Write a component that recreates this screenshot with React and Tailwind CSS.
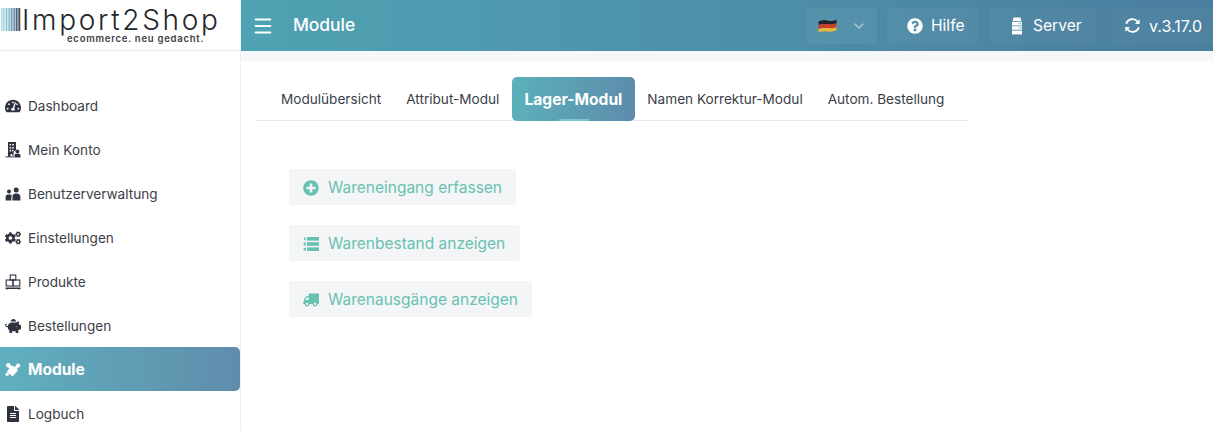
import { FaTachometerAlt, FaCogs, FaPiggyBank, FaFileAlt, FaPlusCircle, FaTruck, FaQuestionCircle } from 'react-icons/fa'
import { Menu, ChevronDown } from 'lucide-react'

// ─── Inline drawings ───────────────────────────────────────────────────────
function Barcode() {
  const cols = ['#a9d8de', '#93ccd5', '#a5d5dc', '#84c0cf', '#8cc0d0', '#6ea9c0', '#6f9fb8', '#5d8aa8', '#4f7a98', '#3d5f7a', '#2f3f52', '#2c2f38']
  return (
    <svg width="20" height="23" viewBox="0 0 20 23" className="shrink-0 mt-[1px]">
      {cols.map((c, i) => (
        <rect key={i} x={i * 1.65} y="0" width="1.1" height="23" fill={c} />
      ))}
    </svg>
  )
}

function BoxesIcon({ className }) {
  return (
    <svg viewBox="0 0 16 16" className={className} fill="none" stroke="currentColor" strokeWidth="1.1">
      <rect x="5.2" y="1" width="5.6" height="5" />
      <rect x="1.2" y="6" width="6.8" height="6" />
      <rect x="8" y="6" width="6.8" height="6" />
      <path d="M0.5 14.2h15M2 14.2v1.3M14 14.2v1.3" strokeWidth="1.4" />
    </svg>
  )
}

function BuildingUserIcon({ className }) {
  return (
    <svg viewBox="0 0 16 16" className={className} fill="currentColor">
      <path fillRule="evenodd" d="M3 0h8v8.2a3 3 0 0 0-2.4 3.2v2.1H7.2V12H5.6v2.6H3ZM4.6 2v1.6h1.5V2Zm2.6 0v1.6h1.6V2ZM4.6 4.9v1.6h1.5V4.9Zm2.6 0v1.6h1.6V4.9ZM4.6 7.8v1.6h1.5V7.8Zm2.6 0v1.6h1.2V7.8Z" />
      <rect x="0.5" y="14.4" width="8.5" height="1" />
      <circle cx="12.4" cy="9.4" r="1.9" />
      <path d="M9.4 15.6v-2.2c0-1 .9-1.7 1.8-1.7h2.4c1 0 1.9.7 1.9 1.7v2.2Z" />
    </svg>
  )
}

function UsersIcon({ className }) {
  return (
    <svg viewBox="0 0 16 16" className={className} fill="currentColor">
      <circle cx="4" cy="5.6" r="2" />
      <path d="M0.6 14.6v-3.4c0-1.5 1-2.6 2.4-2.6h2c.8 0 1.4.3 1.9.8-.4.6-.6 1.2-.6 1.9v3.3Z" />
      <circle cx="11.2" cy="4" r="2.5" />
      <path d="M7.4 14.6v-3.6c0-2 1.4-3.5 3-3.5h1.6c1.7 0 3.4 1.5 3.4 3.5v3.6Z" />
    </svg>
  )
}

function PuzzleIcon({ className }) {
  return (
    <svg viewBox="0 0 16 16" className={className} fill="currentColor">
      <path d="M7.2 3.4 13 8.2 7.6 14.6 1.8 9.4Z" />
      <circle cx="3.2" cy="3.2" r="2.2" />
      <path d="M3 3.4 6 2.8 7.2 6 4 7Z" />
      <circle cx="13.2" cy="3.4" r="2" />
      <path d="M9 5 12.4 3 13.6 5 11 8Z" />
      <circle cx="2.2" cy="12.2" r="1.7" />
    </svg>
  )
}

function ServerIcon({ className }) {
  return (
    <svg viewBox="0 0 12 18" className={className} fill="currentColor">
      <path d="M2.6 0.6h6.8l1.1 3.6h-9z" />
      <path fillRule="evenodd" d="M1 5h10v3.5H1Zm6.5 1.2v1h1v-1Zm1.8 0v1h1v-1Z" />
      <path fillRule="evenodd" d="M1 9.3h10v3.5H1Zm6.5 1.2v1h1v-1Zm1.8 0v1h1v-1Z" />
      <path d="M1 13.6h10v3.8H1z" />
    </svg>
  )
}

function ListIcon({ className }) {
  return (
    <svg viewBox="0 0 16 16" className={className} fill="currentColor">
      <rect x="4" y="1" width="12" height="3.6" />
      <rect x="4" y="6.2" width="12" height="3.6" />
      <rect x="4" y="11.4" width="12" height="3.6" />
      <rect x="1" y="1.4" width="1.6" height="2.8" />
      <rect x="0.6" y="6.6" width="2.2" height="2.8" />
      <rect x="0.6" y="11.8" width="2.2" height="2.8" />
    </svg>
  )
}

function SyncIcon({ className }) {
  return (
    <svg viewBox="0 0 18 18" className={className} fill="none" stroke="currentColor" strokeWidth="2">
      <path d="M2.4 7.2A6.8 6.8 0 0 1 14.4 5" />
      <path d="M15.6 10.8A6.8 6.8 0 0 1 3.6 13" />
      <path d="M16.6 2.4v5h-5z" fill="currentColor" stroke="none" />
      <path d="M1.4 15.6v-5h5z" fill="currentColor" stroke="none" />
    </svg>
  )
}

function FlagIcon() {
  return (
    <svg width="19" height="13" viewBox="0 0 18 13">
      <path d="M0 2.5Q4.5 0 9 1.5T18 0.5V4.5Q13.5 5.5 9 5T0 6Z" fill="#23232b" />
      <path d="M0 6Q4.5 4.5 9 5T18 4.5V8.5Q13.5 9.5 9 9T0 10Z" fill="#c9402f" />
      <path d="M0 10Q4.5 8.5 9 9T18 8.5V11.5Q13.5 13 9 12.5T0 13Z" fill="#e9b93f" />
    </svg>
  )
}

// ─── Data ──────────────────────────────────────────────────────────────────
const NAV = [
  { label: 'Dashboard', Icon: FaTachometerAlt },
  { label: 'Mein Konto', Icon: BuildingUserIcon },
  { label: 'Benutzerverwaltung', Icon: UsersIcon },
  { label: 'Einstellungen', Icon: FaCogs },
  { label: 'Produkte', Icon: BoxesIcon },
  { label: 'Bestellungen', Icon: FaPiggyBank },
  { label: 'Module', Icon: PuzzleIcon, active: true },
  { label: 'Logbuch', Icon: FaFileAlt },
]

const TABS = ['Modulübersicht', 'Attribut-Modul', 'Lager-Modul', 'Namen Korrektur-Modul', 'Autom. Bestellung']

const ACTIONS = [
  { label: 'Wareneingang erfassen', Icon: FaPlusCircle, w: 'w-[227px]' },
  { label: 'Warenbestand anzeigen', Icon: ListIcon, w: 'w-[231px]' },
  { label: 'Warenausgänge anzeigen', Icon: FaTruck, w: 'w-[243px]', flip: true },
]

// ─── Sidebar ───────────────────────────────────────────────────────────────
function Sidebar() {
  return (
    <aside className="w-[241px] shrink-0 border-r border-[#eef0f3] bg-white h-[431px] overflow-hidden">
      <div className="h-[51px] border-b border-[#e9ebee] flex items-start pl-[1px] pt-[7px]">
        <Barcode />
        <div className="ml-[1px]">
          <div className="h-[27px] text-[28px] leading-[26px] font-light text-[#23262d] tracking-[2.7px] font-['Inter',sans-serif]">Import2Shop</div>
          <div className="ml-[45px] text-[9.5px] leading-[10px] font-semibold tracking-[0.75px] text-[#3a3d44] whitespace-nowrap">ecommerce. neu gedacht.</div>
        </div>
      </div>
      <nav className="pt-[32px]">
        {NAV.map(({ label, Icon, active }) => (
          <div
            key={label}
            className={`h-[44px] pt-[2px] flex items-center pl-[5px] gap-[7px] ${active ? 'rounded-r-[5px] bg-gradient-to-r from-[#5fb0bf] to-[#5f8dab] text-white font-bold text-[15.5px]' : 'text-[#3c4048] text-[13.6px]'}`}
          >
            <span className="w-[16px] flex justify-center">
              <Icon className={`w-[16px] h-[16px] ${active ? 'text-white' : 'text-[#2f3340]'}`} />
            </span>
            {label}
          </div>
        ))}
      </nav>
    </aside>
  )
}

// ─── Top bar ───────────────────────────────────────────────────────────────
function TopBar() {
  return (
    <header className="h-[51px] bg-gradient-to-r from-[#4fa3b3] to-[#4a7d9e] flex items-center text-white">
      <Menu className="w-[22px] h-[22px] ml-[11px]" strokeWidth={2.2} />
      <span className="ml-[19px] text-[17.4px] font-medium">Module</span>
      <div className="ml-auto flex items-center h-[36px] text-[15.6px]">
        <div className="w-[70px] h-[36px] rounded-[3px] bg-white/5 flex items-center pl-[11px] gap-[14px]">
          <FlagIcon />
          <ChevronDown className="w-[16px] h-[16px] text-white/50" />
        </div>
        <div className="ml-[10px] h-[36px] w-[91px] rounded-[3px] bg-white/[0.04] flex items-center pl-[20px] gap-[8px]">
          <FaQuestionCircle className="w-[16px] h-[16px]" />
          Hilfe
        </div>
        <div className="ml-[12px] h-[36px] w-[107px] rounded-[3px] bg-white/[0.03] flex items-center pl-[21px] gap-[10px]">
          <ServerIcon className="w-[12px] h-[18px]" />
          Server
        </div>
        <div className="ml-[15px] h-[36px] w-[101px] rounded-l-[3px] bg-white/[0.03] flex items-center pl-[12px] gap-[8px] text-[16px]">
          <SyncIcon className="w-[17px] h-[17px]" />
          v.3.17.0
        </div>
      </div>
    </header>
  )
}

// ─── Main page ─────────────────────────────────────────────────────────────
export default function App() {
  return (
    <div className="w-[1213px] h-[431px] overflow-hidden flex bg-white text-[13.6px] font-['Inter',sans-serif]">
      <Sidebar />
      <div className="flex-1 min-w-0">
        <TopBar />
        <div className="h-[10px] bg-[#f6f7f9]" />
        <div className="pt-[16px] pl-[15px]">
          <div className="w-[712px] h-[44px] border-b border-[#e8eaed] flex items-stretch">
            {TABS.map(t => (
              t === 'Lager-Modul' ? (
                <div key={t} className="relative h-[44px] pt-[2px] px-[12.5px] rounded-[5px] bg-gradient-to-r from-[#5bb0bb] to-[#5d8cab] text-white font-bold text-[15.6px] flex items-center">
                  {t}
                  <span className="absolute bottom-0 left-[47px] w-[30px] h-[2px] bg-[#7cc5cb]" />
                </div>
              ) : (
                <div key={t} className="px-[12.5px] pt-[2px] first:pl-[25px] text-[#3a3e46] flex items-center">{t}</div>
              )
            ))}
          </div>
          <div className="pt-[48px] pl-[33px] flex flex-col gap-[20px]">
            {ACTIONS.map(({ label, Icon, w, flip }) => (
              <div key={label} className={`${w} h-[36px] pt-[1px] rounded-[3px] bg-[#f4f5f7] flex items-center pl-[14px] gap-[9px] text-[#67c2b1] text-[15.5px]`}>
                <Icon className={`w-[16px] h-[16px] ${flip ? '-scale-x-100' : ''}`} />
                {label}
              </div>
            ))}
          </div>
        </div>
      </div>
    </div>
  )
}
